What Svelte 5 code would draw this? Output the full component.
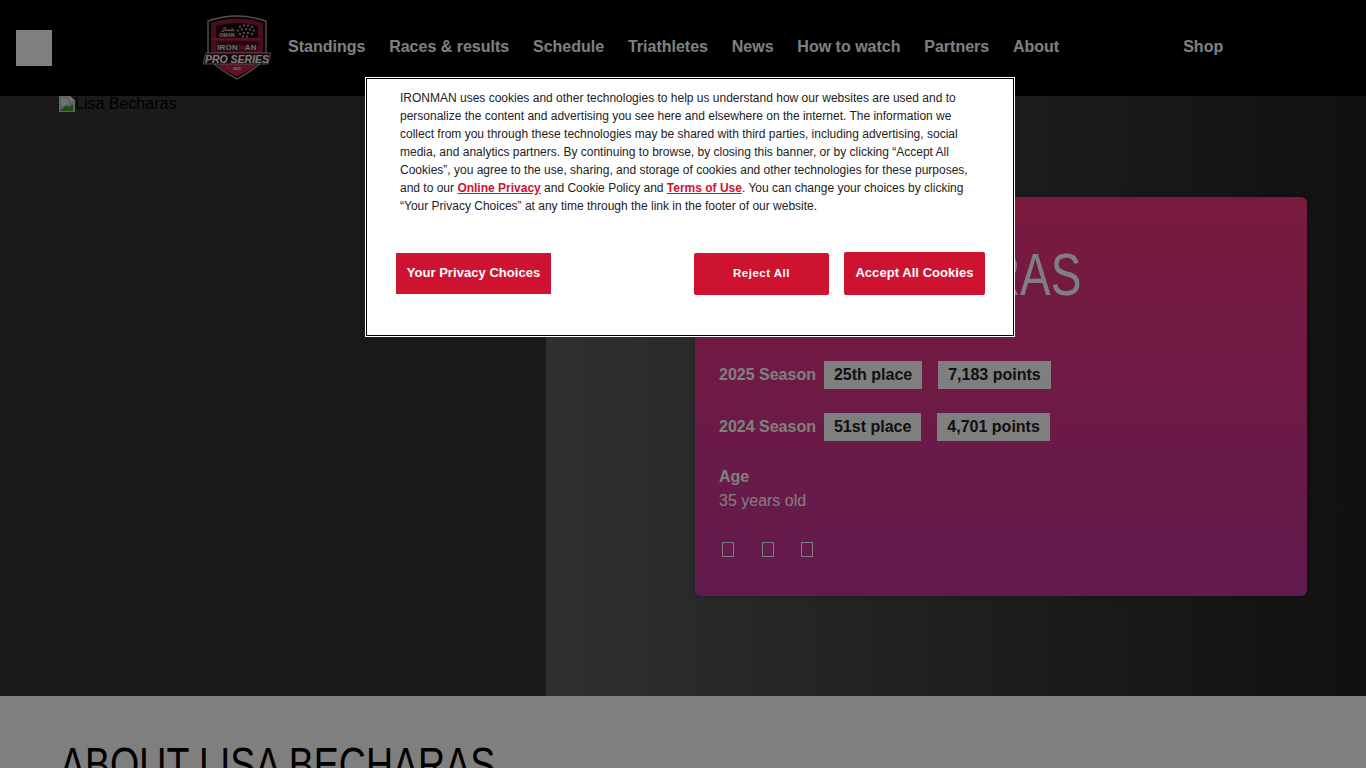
<script>
  const links = ['Standings', 'Races & results', 'Schedule', 'Triathletes', 'News', 'How to watch', 'Partners', 'About'];
  const seasons = [
    { year: '2025 Season', place: '25th place', points: '7,183 points' },
    { year: '2024 Season', place: '51st place', points: '4,701 points' }
  ];
</script>

<div class="page">
  <header class="top">
    <div class="menu"></div>
    <svg class="logo" viewBox="0 0 68 66" aria-label="IRONMAN Pro Series">
      <path d="M5 7 Q34 -3 63 7 L63 42 Q58 52 34 65 Q10 52 5 42 Z" fill="#0a0a0a" stroke="#a89ea0" stroke-width="1.4"/>
      <path d="M8 9 Q34 0 60 9 L60 40 Q56 50 34 62 Q12 50 8 40 Z" fill="#8f1f3c"/>
      <path d="M13 12 Q34 6 55 12 L55 24 L13 24 Z" fill="#1c0a10"/>
      <path d="M8 25 H60" stroke="#e0284a" stroke-width="1"/>
      <path d="M13 27 H55 V37 H13 Z" fill="#4a1222"/>
      <text x="24" y="16.5" class="l-oman">شمال</text>
      <text x="24" y="22.5" class="l-oman">OMAN</text>
      <g fill="#d8d2d2">
        <circle cx="37" cy="13" r=".9"/><circle cx="41" cy="11.5" r=".9"/><circle cx="45" cy="11.5" r=".9"/><circle cx="49" cy="13" r=".9"/>
        <circle cx="35" cy="16.5" r=".9"/><circle cx="39" cy="15.5" r=".9"/><circle cx="43" cy="15" r=".9"/><circle cx="47" cy="15.5" r=".9"/><circle cx="51" cy="16.5" r=".9"/>
        <circle cx="37" cy="20" r=".9"/><circle cx="41" cy="19" r=".9"/><circle cx="45" cy="19" r=".9"/><circle cx="49" cy="20" r=".9"/>
        <circle cx="40" cy="22.5" r=".9"/><circle cx="44" cy="22.5" r=".9"/>
      </g>
      <text x="34" y="36" class="l-iron">IRON<tspan fill="#d9203f">M</tspan>AN</text>
      <path d="M3 39 H68 L65 50 H0 Z" fill="#2a0d16" stroke="#d8d4d4" stroke-width=".7"/>
      <text x="34" y="48.5" class="l-pro">PRO SERIES</text>
      <path d="M14 51 H54 Q47 57 34 62 Q21 57 14 51 Z" fill="#c4204a"/>
      <text x="34" y="56" class="l-year">2025</text>
    </svg>
    <nav class="links">
      {#each links as link}
        <a href="#top">{link}</a>
      {/each}
    </nav>
    <a class="shop" href="#top">Shop</a>
  </header>

  <section class="hero">
    <div class="photo">
      <span class="broken">
        <svg viewBox="0 0 16 16" width="16" height="16">
          <path d="M0 0 H11 L16 5 V16 H0 Z" fill="#c8c8c8"/>
          <path d="M11 0 V5 H16 Z" fill="#f0f0f0"/>
          <path d="M1 14.5 L7 9 L10 11 L14 8 V15 H1 Z" fill="#3f9c35"/>
          <path d="M2 3 H9 V8 L4 10 L2 9 Z" fill="#dbe7f7"/>
        </svg>
        <span>Lisa Becharas</span>
      </span>
    </div>
    <div class="panel">
      <article class="card">
        <h1 class="name">LISA BECHARAS</h1>
        <div class="seasons">
          {#each seasons as s}
            <div class="season">
              <strong>{s.year}</strong>
              <span class="badge first">{s.place}</span>
              <span class="badge">{s.points}</span>
            </div>
          {/each}
        </div>
        <div class="age">
          <strong>Age</strong>
          <span>35 years old</span>
        </div>
        <div class="social">
          <i></i><i></i><i></i>
        </div>
      </article>
    </div>
  </section>

  <section class="about">
    <h2>ABOUT LISA BECHARAS</h2>
  </section>

  <div class="shade"></div>

  <div class="consent" role="dialog">
    <p>IRONMAN uses cookies and other technologies to help us understand how our websites are used and to personalize the content and advertising you see here and elsewhere on the internet. The information we collect from you through these technologies may be shared with third parties, including advertising, social media, and analytics partners. By continuing to browse, by closing this banner, or by clicking “Accept All Cookies”, you agree to the use, sharing, and storage of cookies and other technologies for these purposes, and to our <a href="#top">Online Privacy</a> and Cookie Policy and <a href="#top">Terms of Use</a>. You can change your choices by clicking “Your Privacy Choices” at any time through the link in the footer of our website.</p>
    <div class="actions">
      <button class="choices">Your Privacy Choices</button>
      <div class="right">
        <button class="reject">Reject All</button>
        <button class="accept">Accept All Cookies</button>
      </div>
    </div>
  </div>
</div>

<style>
  :global(body) {
    margin: 0;
    background: #fff;
    font-family: "Liberation Sans", Arial, sans-serif;
  }
  .page {
    position: relative;
    height: 768px;
    overflow: hidden;
  }
  .top {
    height: 96px;
    background: #000;
    display: flex;
    align-items: center;
    padding-left: 16px;
    box-sizing: border-box;
  }
  .menu {
    width: 36px;
    height: 36px;
    background: #fff;
    flex: none;
  }
  .logo {
    width: 68px;
    height: 66px;
    margin-left: 151px;
    margin-top: -3px;
    flex: none;
  }
  .l-oman {
    font: 700 5px "Liberation Sans", "Noto Sans", sans-serif;
    fill: #e4e0e0;
    text-anchor: middle;
  }
  .l-iron {
    font: 700 8px "Liberation Sans", sans-serif;
    fill: #e4e0e0;
    text-anchor: middle;
    letter-spacing: .2px;
  }
  .l-pro {
    font: italic 700 10.5px "Liberation Sans", sans-serif;
    fill: #fff;
    text-anchor: middle;
  }
  .l-year {
    font: 700 3.5px "Liberation Sans", sans-serif;
    fill: #eee;
    text-anchor: middle;
  }
  .links {
    display: flex;
    gap: 23.8px;
    margin-left: 17px;
    margin-top: -2px;
  }
  a {
    text-decoration: none;
  }
  .links a, .shop {
    color: #fff;
    font-size: 16px;
    font-weight: 700;
    white-space: nowrap;
  }
  .shop {
    margin-left: 124px;
    margin-top: -2px;
  }
  .hero {
    height: 600px;
    display: flex;
  }
  .photo {
    width: 546px;
    flex: none;
    background: #343434;
    padding-left: 59px;
    box-sizing: border-box;
  }
  .broken {
    display: flex;
    align-items: flex-start;
    color: #000;
    font-size: 16px;
    line-height: 16px;
  }
  .panel {
    flex: 1;
    background: linear-gradient(90deg, #606060 0%, #383838 60%, #222 100%);
    padding: 101px 59px 100px 149px;
    box-sizing: border-box;
  }
  .card {
    height: 399px;
    border-radius: 6px;
    background: linear-gradient(180deg, #f4347c 0%, #c2369a 100%);
    padding: 45px 24px 0;
    box-sizing: border-box;
    color: #fff;
    box-shadow: 0 0 6px rgba(0, 0, 0, .25);
  }
  .name {
    margin: 0;
    font-family: "Liberation Sans", sans-serif;
    font-weight: 400;
    font-size: 59px;
    line-height: 66px;
    white-space: nowrap;
    transform: scaleX(.778);
    transform-origin: 0 0;
  }
  .seasons {
    margin-top: 53px;
    display: flex;
    flex-direction: column;
    gap: 24px;
  }
  .season {
    display: flex;
    align-items: center;
    height: 28px;
    font-size: 16px;
  }
  .badge {
    background: #fff;
    color: #222;
    font-weight: 700;
    line-height: 28px;
    padding: 0 10px;
  }
  .season strong {
    margin-right: 8px;
  }
  .first {
    margin-right: 16px;
  }
  .age {
    margin-top: 27px;
    display: flex;
    flex-direction: column;
    gap: 6px;
    font-size: 16px;
    line-height: 18px;
  }
  .social {
    margin-top: 32px;
    display: flex;
    gap: 27.5px;
    padding-left: 3px;
  }
  .social i {
    width: 10px;
    height: 13px;
    border: 1px solid #fff;
    display: block;
  }
  .about {
    height: 72px;
    background: #fff;
    padding-left: 60px;
  }
  h2 {
    margin: 0;
    padding-top: 44px;
    font-family: "Liberation Sans", sans-serif;
    font-weight: 400;
    font-size: 48px;
    line-height: 50px;
    color: #000;
    white-space: nowrap;
    transform: scaleX(.782);
    transform-origin: 0 0;
  }
  .shade {
    position: absolute;
    inset: 0;
    background: rgba(0, 0, 0, .5);
  }
  .consent {
    position: absolute;
    left: 367px;
    top: 79px;
    width: 646px;
    height: 256px;
    background: #fff;
    outline: 1px solid #000;
    box-shadow: 0 0 0 2px #fff;
    box-sizing: border-box;
    padding: 10px 28px 0 33px;
    color: #222;
  }
  .consent p {
    margin: 0;
    font-size: 12px;
    line-height: 18px;
    padding-right: 1px;
  }
  .consent p a {
    color: #ce1330;
    font-weight: 700;
    text-decoration: underline;
  }
  .actions {
    display: flex;
    align-items: flex-end;
    justify-content: space-between;
    margin-top: 37px;
    margin-left: -4px;
  }
  button {
    border: 0;
    background: #ce1330;
    color: #fff;
    font-family: "Liberation Sans", Arial, sans-serif;
    font-weight: 700;
    padding: 0 0 2px;
    border-radius: 2px;
  }
  .choices {
    width: 155px;
    height: 41px;
    font-size: 13px;
    letter-spacing: .05px;
    border-radius: 0;
    margin-bottom: 1px;
  }
  .right {
    display: flex;
    align-items: flex-end;
    gap: 15px;
  }
  .reject {
    width: 135px;
    height: 42px;
    font-size: 11.5px;
    letter-spacing: .5px;
  }
  .accept {
    width: 141px;
    height: 43px;
    font-size: 13px;
    letter-spacing: .05px;
  }
</style>
